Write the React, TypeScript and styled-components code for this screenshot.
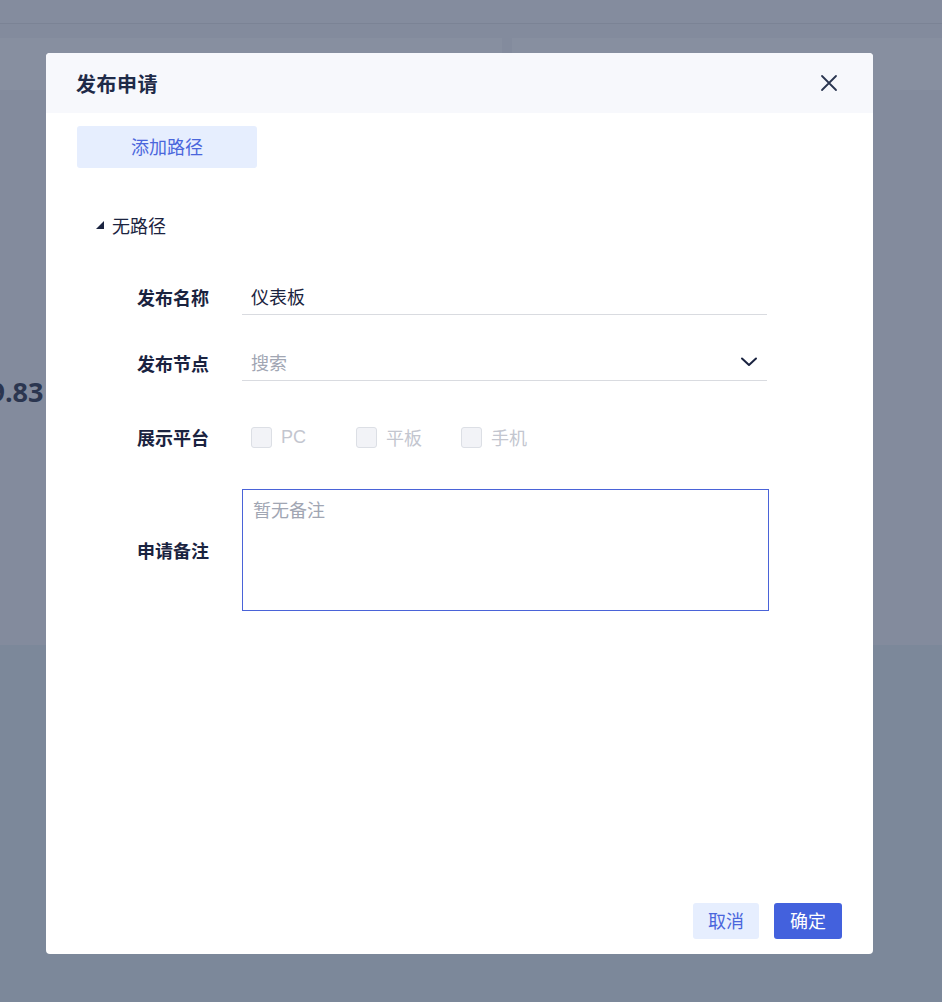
import React from "react";
import styled, { createGlobalStyle } from "styled-components";

const Global = createGlobalStyle`
  html, body { margin: 0; padding: 0; }
  body {
    font-family: "Noto Sans CJK SC", "Noto Sans", sans-serif;
    width: 942px; height: 1002px; overflow: hidden;
    background: #7c889a;
  }
  * { box-sizing: border-box; }
`;

const Page = styled.div`
  width: 942px;
  height: 1002px;
  display: flex;
  flex-direction: column;
  position: relative;
  overflow: hidden;
`;

const TopBar = styled.div`
  height: 24px;
  background: #848c9e;
  border-bottom: 1px solid #7b8395;
  flex-shrink: 0;
`;

const Upper = styled.div`
  background: #838b9d;
  padding-top: 14px;
  height: 621px;
  flex-shrink: 0;
  display: flex;
  flex-direction: column;
`;

const CardRow = styled.div`
  display: flex;
  gap: 10px;
  height: 52px;
`;

const BgCard = styled.div<{ $w?: number }>`
  background: #878fa0;
  ${(p) => (p.$w ? `width: ${p.$w}px;` : "flex: 1;")}
`;

const BigNumber = styled.div`
  margin-top: 286px;
  margin-left: -26px;
  font-family: "Open Sans", "Noto Sans", sans-serif;
  font-weight: 700;
  font-size: 27px;
  color: #2b3650;
  line-height: 32px;
`;

const Lower = styled.div`
  flex: 1;
  background: #7c889a;
`;

const Modal = styled.div`
  position: absolute;
  left: 46px;
  top: 53px;
  width: 827px;
  height: 901px;
  background: #ffffff;
  border-radius: 4px;
  overflow: hidden;
  display: flex;
  flex-direction: column;
`;

const Header = styled.div`
  height: 60px;
  background: #f7f8fc;
  display: flex;
  align-items: center;
  justify-content: space-between;
  padding: 0 31px;
  flex-shrink: 0;
`;

const Title = styled.div`
  font-size: 20px;
  font-weight: 700;
  color: #1f2b48;
  letter-spacing: 0.5px;
  margin-left: -1px;
`;

const CloseBtn = styled.button`
  border: none;
  background: transparent;
  padding: 0;
  width: 20px;
  height: 20px;
  display: flex;
  align-items: center;
  justify-content: center;
  cursor: pointer;
  margin-right: 3px;
`;

const Body = styled.div`
  flex: 1;
  padding: 13px 31px 0;
  display: flex;
  flex-direction: column;
`;

const LightButton = styled.button<{ $w: number; $h: number }>`
  width: ${(p) => p.$w}px;
  height: ${(p) => p.$h}px;
  background: #e6eefe;
  color: #4a66dc;
  border: none;
  border-radius: 3px;
  font-family: inherit;
  font-size: 18px;
  line-height: 1;
  cursor: pointer;
  padding: 0 0 2px;
`;

const PrimaryButton = styled.button`
  width: 68px;
  height: 36px;
  background: #4361dd;
  color: #ffffff;
  border: none;
  border-radius: 3px;
  font-family: inherit;
  font-size: 18px;
  line-height: 1;
  cursor: pointer;
  padding: 0 0 2px;
`;

const TreeNode = styled.div`
  margin-top: 44px;
  margin-left: 19px;
  display: flex;
  align-items: center;
  gap: 8px;
  font-size: 18px;
  color: #1b2440;
  height: 26px;
`;

const Form = styled.div`
  margin-top: 40px;
  margin-left: 60px;
  display: flex;
  flex-direction: column;
`;

const Row = styled.div<{ $mt: number; $align?: string }>`
  display: flex;
  align-items: ${(p) => p.$align || "center"};
  margin-top: ${(p) => p.$mt}px;
`;

const Label = styled.div`
  width: 105px;
  flex-shrink: 0;
  font-size: 18px;
  font-weight: 700;
  color: #1a2340;
`;

const UnderlineField = styled.div`
  width: 525px;
  height: 37px;
  border-bottom: 1px solid #d9dbe0;
  display: flex;
  align-items: center;
  justify-content: space-between;
  padding: 0 9px 0 9px;
  font-size: 18px;
`;

const Value = styled.span<{ $muted?: boolean }>`
  color: ${(p) => (p.$muted ? "#a1a6b3" : "#1b2440")};
`;

const Checks = styled.div`
  display: flex;
  height: 36px;
  align-items: center;
  padding-left: 9px;
`;

const CheckItem = styled.label`
  width: 105px;
  display: flex;
  align-items: center;
  gap: 9px;
  font-size: 18px;
  color: #c3c6cf;
  font-family: "Liberation Sans", "Noto Sans CJK SC", sans-serif;
`;

const Box = styled.span`
  width: 21px;
  height: 21px;
  border: 1px solid #dcdfe5;
  background: #f2f3f7;
  border-radius: 3px;
  display: inline-block;
`;

const TextArea = styled.div`
  width: 527px;
  height: 122px;
  border: 1px solid #4a63d8;
  padding: 8px 10px;
  font-size: 18px;
  color: #a1a6b3;
  line-height: 22px;
`;

const Footer = styled.div`
  display: flex;
  justify-content: flex-end;
  gap: 15px;
  padding: 0 31px 15px;
`;

export default function App() {
  return (
    <>
      <Global />
      <Page>
        <TopBar />
        <Upper>
          <CardRow>
            <BgCard $w={502} />
            <BgCard />
          </CardRow>
          <BigNumber>99.83</BigNumber>
        </Upper>
        <Lower />
        <Modal>
          <Header>
            <Title>发布申请</Title>
            <CloseBtn aria-label="关闭">
              <svg width="18" height="18" viewBox="0 0 18 18">
                <path d="M2 2 L16 16 M16 2 L2 16" stroke="#2a3550" strokeWidth="1.8" strokeLinecap="round" />
              </svg>
            </CloseBtn>
          </Header>
          <Body>
            <LightButton $w={180} $h={42}>添加路径</LightButton>
            <TreeNode>
              <svg width="8" height="8" viewBox="0 0 8 8">
                <polygon points="8,0 8,8 0,8" fill="#1b2440" />
              </svg>
              <span>无路径</span>
            </TreeNode>
            <Form>
              <Row $mt={0}>
                <Label>发布名称</Label>
                <UnderlineField>
                  <Value>仪表板</Value>
                </UnderlineField>
              </Row>
              <Row $mt={29}>
                <Label>发布节点</Label>
                <UnderlineField>
                  <Value $muted>搜索</Value>
                  <svg width="18" height="12" viewBox="0 0 18 12">
                    <path d="M2 2.5 L9 9 L16 2.5" fill="none" stroke="#1a2340" strokeWidth="2" strokeLinecap="round" strokeLinejoin="round" />
                  </svg>
                </UnderlineField>
              </Row>
              <Row $mt={38}>
                <Label>展示平台</Label>
                <Checks>
                  <CheckItem><Box />PC</CheckItem>
                  <CheckItem><Box />平板</CheckItem>
                  <CheckItem><Box />手机</CheckItem>
                </Checks>
              </Row>
              <Row $mt={34}>
                <Label>申请备注</Label>
                <TextArea>暂无备注</TextArea>
              </Row>
            </Form>
          </Body>
          <Footer>
            <LightButton $w={66} $h={36}>取消</LightButton>
            <PrimaryButton>确定</PrimaryButton>
          </Footer>
        </Modal>
      </Page>
    </>
  );
}
